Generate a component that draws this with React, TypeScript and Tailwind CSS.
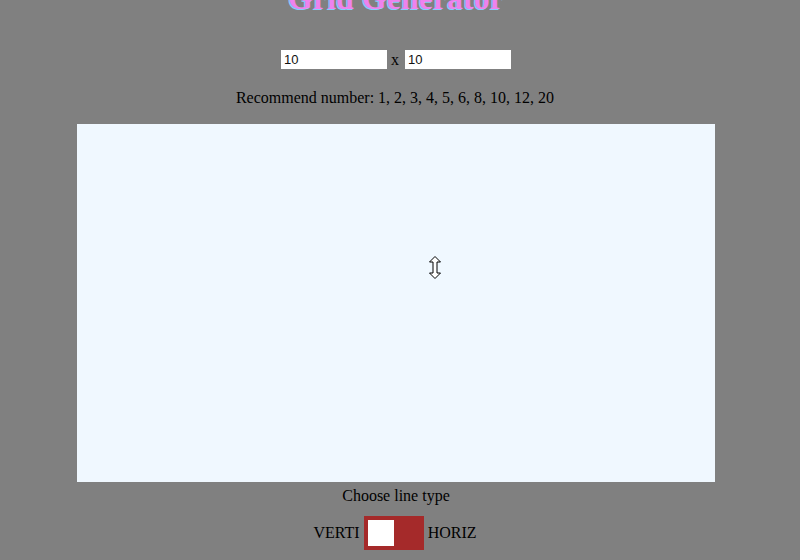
import React from "react";

export default function App() {
  return (
    <div className="min-h-[560px] h-[560px] overflow-hidden bg-[#808080] text-black font-['Liberation_Serif',serif]">
      <div className="w-[792px] flex flex-col items-center">
        <h1 className="mt-[-20px] text-[32px] leading-[37px] font-bold text-[#ee82ee] [text-shadow:-1px_1px_0_#87cefa]">
          Grid Generator
        </h1>
        <div className="mt-[33px] flex items-center h-[19px]">
          <input
            defaultValue="10"
            className="w-[106px] h-[19px] bg-white px-[3px] text-[13px] text-[#111] font-['Liberation_Sans',sans-serif] outline-none"
          />
          <span className="ml-[4px] mr-[6px] text-[16px] leading-[18px]">x</span>
          <input
            defaultValue="10"
            className="w-[106px] h-[19px] bg-white px-[3px] text-[13px] text-[#111] font-['Liberation_Sans',sans-serif] outline-none"
          />
        </div>
        <p className="mt-[20px] text-[16px] leading-[18px] mr-[2px]">
          Recommend number: 1, 2, 3, 4, 5, 6, 8, 10, 12, 20
        </p>
        <div className="relative mt-[17px] w-[638px] h-[358px] bg-[#f0f8ff]">
          <svg
            className="absolute left-[352px] top-[132px]"
            width="12"
            height="23"
            viewBox="0 0 12 23"
          >
            <path
              d="M6 0.5 L11.5 6 L8 6 L8 17 L11.5 17 L6 22.5 L0.5 17 L4 17 L4 6 L0.5 6 Z"
              fill="#fff"
              stroke="#000"
              strokeWidth="1"
            />
          </svg>
        </div>
        <p className="mt-[5px] text-[16px] leading-[18px]">Choose line type</p>
        <div className="mt-[11px] mr-[2px] flex items-center gap-[4px] text-[16px] leading-[18px]">
          <span>VERTI</span>
          <div className="w-[60px] h-[34px] bg-[#a52a2a] flex items-center pl-[4px]">
            <div className="w-[26px] h-[26px] bg-white" />
          </div>
          <span>HORIZ</span>
        </div>
      </div>
    </div>
  );
}
